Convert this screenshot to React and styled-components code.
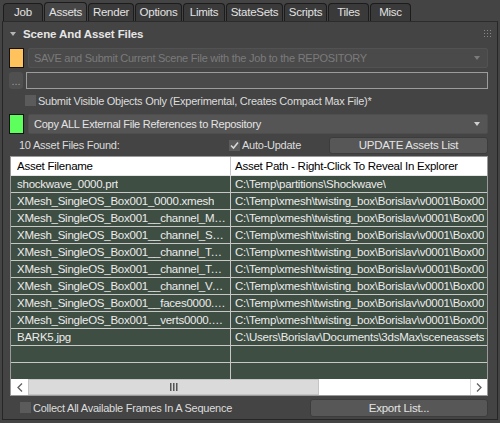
import React from 'react';
import styled, { createGlobalStyle } from 'styled-components';

const GlobalStyle = createGlobalStyle`
  html, body { margin: 0; padding: 0; background: #3a3a3a; }
  * { box-sizing: border-box; }
`;

const Window = styled.div`
  width: 500px;
  height: 423px;
  background: #444444;
  font-family: "Liberation Sans", Arial, sans-serif;
  font-size: 11px;
  letter-spacing: -0.25px;
  color: #dcdcdc;
  display: flex;
  flex-direction: column;
  overflow: hidden;
`;

const TabBar = styled.div`
  height: 21px;
  display: flex;
  align-items: flex-end;
  padding-left: 3px;
  gap: 1px;
`;

const Tab = styled.div`
  width: ${p => p.w}px;
  height: ${p => (p.active ? 19 : 18)}px;
  display: flex;
  align-items: center;
  justify-content: center;
  background: ${p => (p.active ? '#464646' : '#3a3a3a')};
  border: 1px solid #1c1c1c;
  border-bottom: none;
  border-radius: 4px 4px 0 0;
  color: #e2e2e2;
  font-size: 11.5px;
  padding-bottom: 1px;
`;

const Panel = styled.div`
  flex: 1;
  margin: 0 2px 3px 2px;
  border: 1px solid #262626;
  border-top-color: #2c2c2c;
  background: #444444;
  display: flex;
  flex-direction: column;
`;

const RolloutHeader = styled.div`
  height: 23px;
  display: flex;
  align-items: center;
  padding: 0 6px 0 7px;
  gap: 7px;
  font-weight: bold;
  font-size: 11.5px;
  letter-spacing: -0.1px;
  color: #e6e6e6;
`;

const Title = styled.div`
  flex: 1;
`;

const Body = styled.div`
  display: flex;
  flex-direction: column;
  padding: 3px 9px 0 6px;
`;

const Row = styled.div`
  display: flex;
  align-items: center;
  gap: ${p => p.gap ?? 4}px;
  height: ${p => p.h}px;
  margin-top: ${p => p.mt ?? 0}px;
  padding-left: ${p => p.pl ?? 0}px;
`;

const Swatch = styled.div`
  width: 15px;
  height: 20px;
  background: ${p => p.color};
  border: 1px solid #111;
  flex-shrink: 0;
`;

const Combo = styled.div`
  flex: 1;
  height: 20px;
  display: flex;
  align-items: center;
  padding: 0 7px 0 5px;
  background: ${p => (p.disabled ? '#4a4a4a' : '#555555')};
  border: 1px solid ${p => (p.disabled ? '#525252' : '#4e4e4e')};
  border-radius: 2px;
  color: ${p => (p.disabled ? '#7b7b7b' : '#e4e4e4')};
  white-space: nowrap;
  overflow: hidden;
`;

const ComboText = styled.span`
  flex: 1;
`;

const Arrow = styled.span`
  width: 0;
  height: 0;
  border-left: 3.5px solid transparent;
  border-right: 3.5px solid transparent;
  border-top: 4px solid ${p => p.color};
`;

const DotsButton = styled.div`
  width: 14px;
  height: 17px;
  background: #505050;
  border-radius: 3px;
  color: #9a9a9a;
  font-size: 11px;
  letter-spacing: 0;
  display: flex;
  align-items: flex-end;
  justify-content: center;
  padding-bottom: 2px;
  line-height: 1;
`;

const TextField = styled.div`
  flex: 1;
  height: 17px;
  background: #4a4a4a;
  border: 1px solid #9c9c9c;
`;

const CheckBox = styled.div`
  width: 11px;
  height: 11px;
  background: #5b5b5b;
  flex-shrink: 0;
  display: flex;
  align-items: center;
  justify-content: center;
`;

const Label = styled.span`
  white-space: nowrap;
  margin-left: ${p => p.ml ?? 0}px;
  width: ${p => (p.w ? `${p.w}px` : 'auto')};
  flex-shrink: 0;
`;

const Spacer = styled.div`
  flex: 1;
`;

const Button = styled.div`
  width: ${p => p.w}px;
  height: ${p => p.h}px;
  background: #575757;
  border: 1px solid #3c3c3c;
  border-radius: 3px;
  display: flex;
  align-items: center;
  justify-content: center;
  color: #e4e4e4;
  font-size: 11.5px;
`;

const List = styled.div`
  height: 240px;
  margin: 2px 0 0 1px;
  border: 1px solid #9a9a9a;
  display: flex;
  flex-direction: column;
  overflow: hidden;
  background: #3f4e43;
`;

const ListRow = styled.div`
  display: grid;
  grid-template-columns: 220px 1fr;
  height: ${p => (p.header ? 19 : 17)}px;
  flex-shrink: 0;
  background: ${p => (p.header ? '#ffffff' : '#3f4e43')};
  color: ${p => (p.header ? '#000' : '#ececec')};
  border-bottom: 1px solid ${p => (p.header ? '#e6e6e6' : '#c7c7c7')};
  font-size: 11.5px;
`;

const Cell = styled.div`
  display: flex;
  align-items: center;
  min-width: 0;
  padding: 0 3px 0 ${p => (p.first ? 6 : 4)}px;
  border-right: ${p => (p.first ? '1px solid #c7c7c7' : 'none')};
  overflow: hidden;
`;

const CellText = styled.span`
  white-space: nowrap;
  overflow: hidden;
  text-overflow: ${p => (p.clip ? 'clip' : 'ellipsis')};
`;

const Rows = styled.div`
  flex: 1;
  overflow: hidden;
`;

const ScrollBar = styled.div`
  height: 16px;
  flex-shrink: 0;
  display: flex;
  background: #ffffff;
`;

const ScrollArrow = styled.div`
  width: 17px;
  display: flex;
  align-items: center;
  justify-content: center;
  background: #fff;
  border-left: ${p => (p.right ? '1px solid #dcdcdc' : 'none')};
`;

const Thumb = styled.div`
  width: 291px;
  background: #dadada;
  border: 1px solid #c4c4c4;
  display: flex;
  align-items: center;
  justify-content: center;
`;

const Track = styled.div`
  flex: 1;
`;

const Check = () => (
  <svg width="9" height="9" viewBox="0 0 9 9">
    <path d="M1 4.5 L3.5 7 L8 1.5" fill="none" stroke="#d8d8d8" strokeWidth="1.6" />
  </svg>
);

const Grip = () => (
  <svg width="7" height="7" viewBox="0 0 7 7">
    {[0, 3, 6].map(x => [0, 3, 6].map(y => (
      <rect key={x + '-' + y} x={x} y={y} width="1" height="1" fill="#8a8a8a" />
    )))}
  </svg>
);

const Chevron = ({ dir }) => (
  <svg width="6" height="9" viewBox="0 0 6 9">
    <path d={dir === 'left' ? 'M5 0.5 L1 4.5 L5 8.5' : 'M1 0.5 L5 4.5 L1 8.5'} fill="none" stroke="#606060" strokeWidth="1.3" />
  </svg>
);

const Bars = () => (
  <svg width="8" height="8" viewBox="0 0 8 8">
    <rect x="0" y="0" width="1.5" height="8" fill="#555" />
    <rect x="3" y="0" width="1.5" height="8" fill="#555" />
    <rect x="6" y="0" width="1.5" height="8" fill="#555" />
  </svg>
);

const tabs = [
  ['Job', 40], ['Assets', 43], ['Render', 46], ['Options', 47], ['Limits', 42],
  ['StateSets', 57], ['Scripts', 43], ['Tiles', 41], ['Misc', 41],
];

const xmeshPath = 'C:\\Temp\\xmesh\\twisting_box\\Borislav\\v0001\\Box001\\';

const assets = [
  ['shockwave_0000.prt', 'C:\\Temp\\partitions\\Shockwave\\'],
  ['XMesh_SingleOS_Box001_0000.xmesh', xmeshPath],
  ['XMesh_SingleOS_Box001__channel_Material_0000.xmdat', xmeshPath],
  ['XMesh_SingleOS_Box001__channel_SmoothingGroup_0000.xmdat', xmeshPath],
  ['XMesh_SingleOS_Box001__channel_TextureCoord_0000.xmdat', xmeshPath],
  ['XMesh_SingleOS_Box001__channel_TextureCoord2_0000.xmdat', xmeshPath],
  ['XMesh_SingleOS_Box001__channel_Velocity_0000.xmdat', xmeshPath],
  ['XMesh_SingleOS_Box001__faces0000.xmdat', xmeshPath],
  ['XMesh_SingleOS_Box001__verts0000.xmdat', xmeshPath],
  ['BARK5.jpg', 'C:\\Users\\Borislav\\Documents\\3dsMax\\sceneassets\\images\\'],
  ['', ''],
  ['', ''],
];

export default function App() {
  return (
    <>
      <GlobalStyle />
      <Window>
        <TabBar>
          {tabs.map(([name, w]) => (
            <Tab key={name} w={w} active={name === 'Assets'}>{name}</Tab>
          ))}
        </TabBar>
        <Panel>
          <RolloutHeader>
            <Arrow color="#b5b5b5" />
            <Title>Scene And Asset Files</Title>
            <Grip />
          </RolloutHeader>
          <Body>
            <Row h={20}>
              <Swatch color="#ffc25c" />
              <Combo disabled>
                <ComboText>SAVE and Submit Current Scene File with the Job to the REPOSITORY</ComboText>
                <Arrow color="#7b7b7b" />
              </Combo>
            </Row>
            <Row h={17} mt={4} gap={3}>
              <DotsButton>...</DotsButton>
              <TextField />
            </Row>
            <Row h={17} mt={3} pl={16} gap={2}>
              <CheckBox />
              <Label>Submit Visible Objects Only (Experimental, Creates Compact Max File)*</Label>
            </Row>
            <Row h={20} mt={5}>
              <Swatch color="#5cff5c" />
              <Combo>
                <ComboText>Copy ALL External File References to Repository</ComboText>
                <Arrow color="#d0d0d0" />
              </Combo>
            </Row>
            <Row h={18} mt={2} gap={0}>
              <Label ml={10} w={210}>10 Asset Files Found:</Label>
              <CheckBox><Check /></CheckBox>
              <Label ml={2}>Auto-Update</Label>
              <Spacer />
              <Button w={159} h={17}>UPDATE Assets List</Button>
            </Row>
            <List>
              <ListRow header>
                <Cell first><CellText>Asset Filename</CellText></Cell>
                <Cell><CellText clip>Asset Path - Right-Click To Reveal In Explorer</CellText></Cell>
              </ListRow>
              <Rows>
                {assets.map(([file, path], i) => (
                  <ListRow key={i}>
                    <Cell first><CellText>{file}</CellText></Cell>
                    <Cell><CellText clip>{path}</CellText></Cell>
                  </ListRow>
                ))}
              </Rows>
              <ScrollBar>
                <ScrollArrow><Chevron dir="left" /></ScrollArrow>
                <Thumb><Bars /></Thumb>
                <Track />
                <ScrollArrow right><Chevron dir="right" /></ScrollArrow>
              </ScrollBar>
            </List>
            <Row h={19} mt={2} gap={0} pl={11}>
              <CheckBox />
              <Label ml={2}>Collect All Available Frames In A Sequence</Label>
              <Spacer />
              <Button w={178} h={18}>Export List...</Button>
            </Row>
          </Body>
        </Panel>
      </Window>
    </>
  );
}
